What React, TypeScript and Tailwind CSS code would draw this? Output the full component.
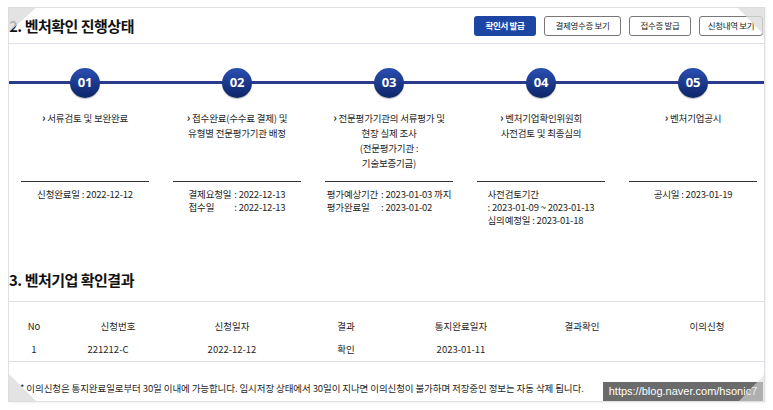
import React from "react";

type Step = {
    no: string,
    title: string[],
    dates: React.ReactNode
};

const Chevron: React.FC = () => (
    <span className="font-bold text-[11px] mr-[2px]">›</span>
);

const Label: React.FC<{ rows: [string, string][] }> = ({ rows }) => (
    <div className="inline-grid grid-cols-[max-content_max-content] gap-x-[3px] text-left">
        {rows.map(([k, v]) => (
            <React.Fragment key={k}>
                <span>{k}</span>
                <span>{v}</span>
            </React.Fragment>
        ))}
    </div>
);

const steps: Step[] = [
    {
        no: "01",
        title: ["서류검토 및 보완완료"],
        dates: <div>신청완료일 : 2022-12-12</div>
    },
    {
        no: "02",
        title: ["접수완료(수수료 결제) 및", "유형별 전문평가기관 배정"],
        dates: <Label rows={[["결제요청일", ": 2022-12-13"], ["접수일", ": 2022-12-13"]]} />
    },
    {
        no: "03",
        title: ["전문평가기관의 서류평가 및", "현장 실제 조사", "(전문평가기관 :", "기술보증기금)"],
        dates: <Label rows={[["평가예상기간", ": 2023-01-03 까지"], ["평가완료일", ": 2023-01-02"]]} />
    },
    {
        no: "04",
        title: ["벤처기업확인위원회", "사전검토 및 최종심의"],
        dates: (
            <div className="inline-block text-left">
                <div>사전검토기간</div>
                <div>: 2023-01-09 ~ 2023-01-13</div>
                <div>심의예정일 : 2023-01-18</div>
            </div>
        )
    },
    {
        no: "05",
        title: ["벤처기업공시"],
        dates: <div>공시일 : 2023-01-19</div>
    }
];

// table columns: [label, width, value]
const columns: [string, string, string][] = [
    ["No", "w-[50px]", "1"],
    ["신청번호", "w-[118px]", "221212-C"],
    ["신청일자", "w-[110px]", "2022-12-12"],
    ["결과", "w-[118px]", "확인"],
    ["통지완료일자", "w-[112px]", "2023-01-11"],
    ["결과확인", "w-[130px]", ""],
    ["이의신청", "w-[120px]", ""]
];

const App: React.FC = () => {
    return (
        <div className="relative w-[773px] h-[410px] bg-white overflow-hidden text-[#262626] font-['Noto_Sans_CJK_KR','Noto_Sans',sans-serif]">
            <div className="ml-[8px] mt-[7px] w-[757px] h-[395px] border border-[#e0e0e0] overflow-hidden shadow-[1px_1px_2px_rgba(0,0,0,0.06)]">
                {/* 2. 진행상태 */}
                <div className="h-[36px] flex items-center justify-between border-b border-[#dedee8]">
                    <h2 className="text-[15px] font-bold tracking-[-0.5px] text-[#111] leading-[22px]">2. 벤처확인 진행상태</h2>
                    <div className="flex gap-[8px] pr-[1px] text-[8.5px] tracking-[-0.3px] text-[#222]">
                        <button className="w-[62px] h-[20px] rounded-[3px] bg-[#1c45a4] text-white font-bold">확인서 발급</button>
                        <button className="w-[77px] h-[20px] rounded-[3px] border border-[#777] bg-white">결제영수증 보기</button>
                        <button className="w-[62px] h-[20px] rounded-[3px] border border-[#777] bg-white">접수증 발급</button>
                        <button className="w-[64px] h-[20px] rounded-[3px] border border-[#777] bg-white">신청내역 보기</button>
                    </div>
                </div>

                <div className="pt-[24px] grid grid-cols-[repeat(5,152px)] text-[9.5px] tracking-[-0.2px]">
                    {steps.map((s) => (
                        <div key={s.no} className="flex flex-col items-center">
                            <div className="relative w-full h-[30px] flex items-center justify-center">
                                <div className="absolute left-0 right-0 top-[13px] h-[3px] bg-[#2a3b8c]" />
                                <div className="relative w-[30px] h-[30px] rounded-full bg-gradient-to-b from-[#2b4fb3] to-[#0e2467] text-white font-bold text-[13px] font-['Noto_Sans',sans-serif] flex items-center justify-center shadow-[0_1px_1px_rgba(0,0,0,0.3)]">
                                    {s.no}
                                </div>
                            </div>
                            <div className="mt-[12px] h-[71px] text-center leading-[15px]">
                                {s.title.map((t, i) => (
                                    <div key={t}>
                                        {i === 0 && <Chevron />}
                                        {t}
                                    </div>
                                ))}
                            </div>
                            <div className="w-[128px] h-px bg-[#333]" />
                            <div className="mt-[6px] leading-[13px] text-center">{s.dates}</div>
                        </div>
                    ))}
                </div>

                {/* 3. 확인결과 */}
                <h2 className="mt-[42px] pb-[10px] border-b border-[#dedee8] text-[15px] font-bold tracking-[-0.5px] text-[#111] leading-[22px]">3. 벤처기업 확인결과</h2>

                <div className="pb-[2px] border-b border-[#dedee8] text-[9.5px]">
                    <div className="mt-[14px] h-[20px] flex items-center">
                        {columns.map(([label, w]) => (
                            <div key={label} className={`${w} shrink-0 text-center`}>{label}</div>
                        ))}
                    </div>
                    <div className="mt-[3px] h-[20px] flex items-center">
                        {columns.map(([label, w, value]) => (
                            <div key={label} className={`${w} shrink-0 text-center ${label === "신청번호" ? "pr-[20px]" : ""}`}>{value}</div>
                        ))}
                    </div>
                </div>

                <p className="mt-[19px] pl-[11px] text-[9.5px] leading-[14px] tracking-[-0.1px] whitespace-nowrap">
                    * 이의신청은 통지완료일로부터 30일 이내에 가능합니다. 임시저장 상태에서 30일이 지나면 이의신청이 불가하며 저장중인 정보는 자동 삭제 됩니다.
                </p>
            </div>

            {/* watermark */}
            <div className="absolute right-[10px] bottom-[9px] w-[160px] h-[19px] bg-[#6b6b6b] text-white text-[11px] font-['Liberation_Sans',sans-serif] flex items-center justify-center">
                https://blog.naver.com/hsonic7
            </div>

            {/* folded corners */}
            <div className="absolute left-[8px] top-[7px] w-[29px] h-[26px] bg-[#dcdcdc] opacity-80 [clip-path:polygon(0_0,100%_0,0_100%)]" />
            <div className="absolute right-[8px] top-[7px] w-[28px] h-[29px] bg-[#dcdcdc] opacity-80 [clip-path:polygon(0_0,100%_0,100%_100%)]" />
            <div className="absolute left-[8px] bottom-[8px] w-[29px] h-[29px] bg-[#dcdcdc] opacity-80 [clip-path:polygon(0_0,100%_100%,0_100%)]" />
            <div className="absolute right-[8px] bottom-[8px] w-[27px] h-[28px] bg-[#dcdcdc] opacity-60 [clip-path:polygon(100%_0,100%_100%,0_100%)]" />
        </div>
    );
};

export default App;
